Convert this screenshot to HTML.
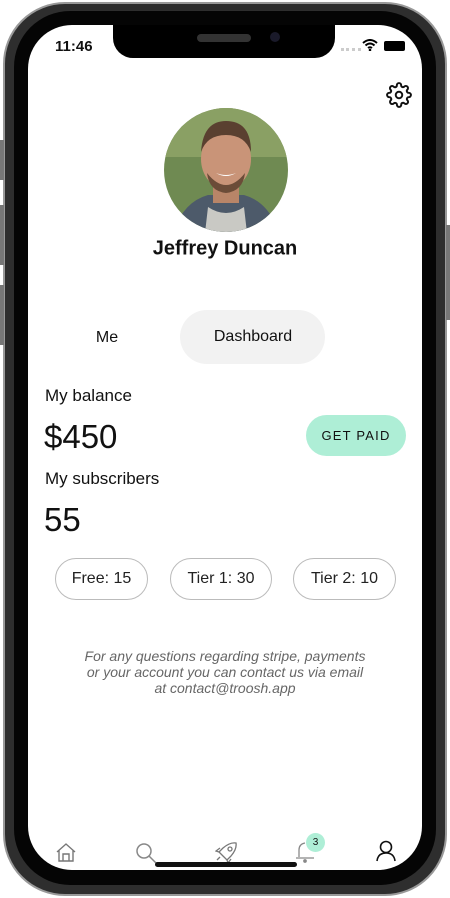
<!DOCTYPE html>
<html><head><meta charset="utf-8"><style>
*{margin:0;padding:0;box-sizing:border-box}
body{width:450px;height:898px;background:#fff;position:relative;overflow:hidden;font-family:"Liberation Sans",sans-serif;color:#111}
.frame{position:absolute;left:3px;top:2px;width:444px;height:894px;border-radius:62px;background:#2e2e2e;border:2px solid #999}
.inner{position:absolute;left:14px;top:11px;width:422px;height:874px;border-radius:56px;background:#050505}
.screen{position:absolute;left:28px;top:25px;width:394px;height:845px;border-radius:44px;background:#fff;overflow:hidden}
.notch{position:absolute;left:85px;top:0;width:222px;height:33px;background:#000;border-radius:0 0 20px 20px}
.a{position:absolute}
.c{position:absolute;transform:translate(-50%,-50%);white-space:nowrap}
.chip{position:absolute;border:1px solid #bbb;border-radius:21px;height:42px;display:flex;align-items:center;justify-content:center;font-size:16px;color:#222}
</style></head><body>
<div class="frame"></div>
<div class="a" style="left:0;top:140px;width:4px;height:40px;background:#777"></div>
<div class="a" style="left:0;top:205px;width:4px;height:60px;background:#777"></div>
<div class="a" style="left:0;top:285px;width:4px;height:60px;background:#777"></div>
<div class="a" style="left:446px;top:225px;width:4px;height:95px;background:#777"></div>
<div class="inner"></div>
<div class="screen">
 <div class="notch"><div class="a" style="left:84px;top:9px;width:54px;height:8px;border-radius:4px;background:#333"></div><div class="a" style="left:157px;top:7px;width:10px;height:10px;border-radius:5px;background:#1a1a2a"></div></div>
 <div class="a" style="left:27px;top:13px;font-size:15px;font-weight:bold">11:46</div>
 <div class="a" style="left:313px;top:23px;width:20px;height:3px;border-top:3px dotted #ccc"></div>
 <svg class="a" style="left:334px;top:14px" width="16" height="12" viewBox="0 0 16 12"><path d="M1 4Q8-2 15 4M3.5 6.5Q8 2.5 12.5 6.5M6 9Q8 7.5 10 9" stroke="#000" stroke-width="2" fill="none"/><circle cx="8" cy="11" r="1.3"/></svg>
 <div class="a" style="left:356px;top:16px;width:21px;height:10px;border-radius:2px;background:#000"></div>
 <svg class="a" style="left:358px;top:57px" width="26" height="26" viewBox="0 0 24 24" fill="none" stroke="#111" stroke-width="1.8"><circle cx="12" cy="12" r="3"/><path d="M19.4 15a1.65 1.65 0 0 0 .33 1.820l.06.06a2 2 0 1 1-2.83 2.83l-.06-.06a1.65 1.650 0 0 0-1.82-.33 1.65 1.65 0 0 0-1 1.51V21a2 2 0 1 1-4 0v-.09A1.65 1.65 0 0 0 9 19.4a1.65 1.65 0 0 0-1.82.33l-.06.06a2 2 0 1 1-2.83-2.83l.06-.06A1.65 1.65 0 0 0 4.68 15a1.65 1.65 0 0 0-1.51-1H3a2 2 0 1 1 0-4h.09A1.65 1.65 0 0 0 4.6 9a1.65 1.65 0 0 0-.33-1.82l-.06-.06a2 2 0 1 1 2.83-2.83l.06.06A1.65 1.65 0 0 0 9 4.68a1.65 1.65 0 0 0 1-1.51V3a2 2 0 1 1 4 0v.09a1.65 1.65 0 0 0 1 1.51 1.65 1.65 0 0 0 1.82-.33l.06-.06a2 2 0 1 1 2.83 2.830l-.06.06A1.65 1.65 0 0 0 19.4 9a1.65 1.65 0 0 0 1.51 1H21a2 2 0 1 1 0 4h-.09a1.65 1.65 0 0 0-1.51 1z"/></svg>
 <svg class="a" style="left:135px;top:82px" width="126" height="126" viewBox="0 0 126 126"><defs><clipPath id="cp"><circle cx="63" cy="63" r="62"/></clipPath></defs><g clip-path="url(#cp)"><rect width="126" height="126" fill="#6f8a52"/><rect y="0" width="126" height="50" fill="#8aa064"/><path d="M10 126 Q20 95 45 88 L81 88 Q106 95 116 126Z" fill="#4d5a6a"/><path d="M45 100 Q63 112 81 100 L84 126 L42 126Z" fill="#c9c9c4"/><rect x="50" y="70" width="26" height="26" fill="#b88568"/><ellipse cx="63" cy="52" rx="25" ry="30" fill="#c99478"/><path d="M38 45 Q40 14 63 14 Q88 14 88 45 Q82 28 63 28 Q44 28 38 45Z" fill="#5a4030"/><path d="M44 66 Q63 90 82 66 Q80 84 63 86 Q46 84 44 66Z" fill="#6b4c38"/><path d="M53 66 Q63 72 73 66 Q63 70 53 66Z" fill="#fff"/></g></svg>
 <div class="c" style="left:197px;top:224px;font-size:20px;font-weight:bold;color:#111">Jeffrey Duncan</div>
 <div class="c" style="left:79px;top:313px;font-size:16px">Me</div>
 <div class="a" style="left:152px;top:285px;width:145px;height:54px;border-radius:27px;background:#f2f2f2"></div>
 <div class="c" style="left:225px;top:312px;font-size:16px">Dashboard</div>
 <div class="a" style="left:17px;top:361px;font-size:17px">My balance</div>
 <div class="a" style="left:16px;top:393px;font-size:33px">$450</div>
 <div class="a" style="left:278px;top:390px;width:100px;height:41px;border-radius:21px;background:#aeeed6;font-size:13px;letter-spacing:1.2px;display:flex;align-items:center;justify-content:center">GET PAID</div>
 <div class="a" style="left:17px;top:444px;font-size:17px">My subscribers</div>
 <div class="a" style="left:16px;top:476px;font-size:33px">55</div>
 <div class="chip" style="left:27px;top:533px;width:93px">Free: 15</div>
 <div class="chip" style="left:142px;top:533px;width:102px">Tier 1: 30</div>
 <div class="chip" style="left:265px;top:533px;width:103px">Tier 2: 10</div>
 <div class="a" style="left:0;top:623px;width:394px;text-align:center;font-size:14px;line-height:16px;font-style:italic;color:#666">For any questions regarding stripe, payments<br>or your account you can contact us via email<br>at contact@troosh.app</div>
 <svg class="a" style="left:28px;top:817px" width="20" height="20" viewBox="0 0 20 20" fill="none" stroke="#777" stroke-width="1.4"><path d="M1 10L10 2L19 10M3 8V19H17V8M7 19V12H13V19"/></svg>
 <svg class="a" style="left:107px;top:817px" width="24" height="22" viewBox="0 0 24 22" fill="none" stroke="#888" stroke-width="1.5"><circle cx="9" cy="9" r="7"/><path d="M14 14L21 21"/></svg>
 <svg class="a" style="left:187px;top:817px" width="22" height="20" viewBox="0 0 22 20" fill="none" stroke="#777" stroke-width="1.3"><path d="M8 14L4 10L8 6Q15 0 21 1Q22 7 16 14L12 18Z M4 10L1 9L5 6M12 18L13 21L16 17"/><circle cx="15" cy="7" r="2"/><path d="M5 15L2 18"/></svg>
 <svg class="a" style="left:266px;top:815px" width="22" height="24" viewBox="0 0 22 24" fill="none" stroke="#888" stroke-width="1.3"><path d="M5 17V10Q5 4 11 3M2 18H20"/><circle cx="11" cy="21" r="1.2" fill="#888"/></svg>
 <div class="a" style="left:278px;top:808px;width:19px;height:19px;border-radius:50%;background:#aeeed6;font-size:10px;display:flex;align-items:center;justify-content:center">3</div>
 <svg class="a" style="left:348px;top:815px" width="20" height="22" viewBox="0 0 20 22" fill="none" stroke="#111" stroke-width="1.6"><circle cx="10" cy="7" r="5.5"/><path d="M1 21Q2 13 10 13Q18 13 19 21"/></svg>
 <div class="a" style="left:127px;top:837px;width:142px;height:5px;border-radius:3px;background:#111"></div>
</div>
</body></html>
